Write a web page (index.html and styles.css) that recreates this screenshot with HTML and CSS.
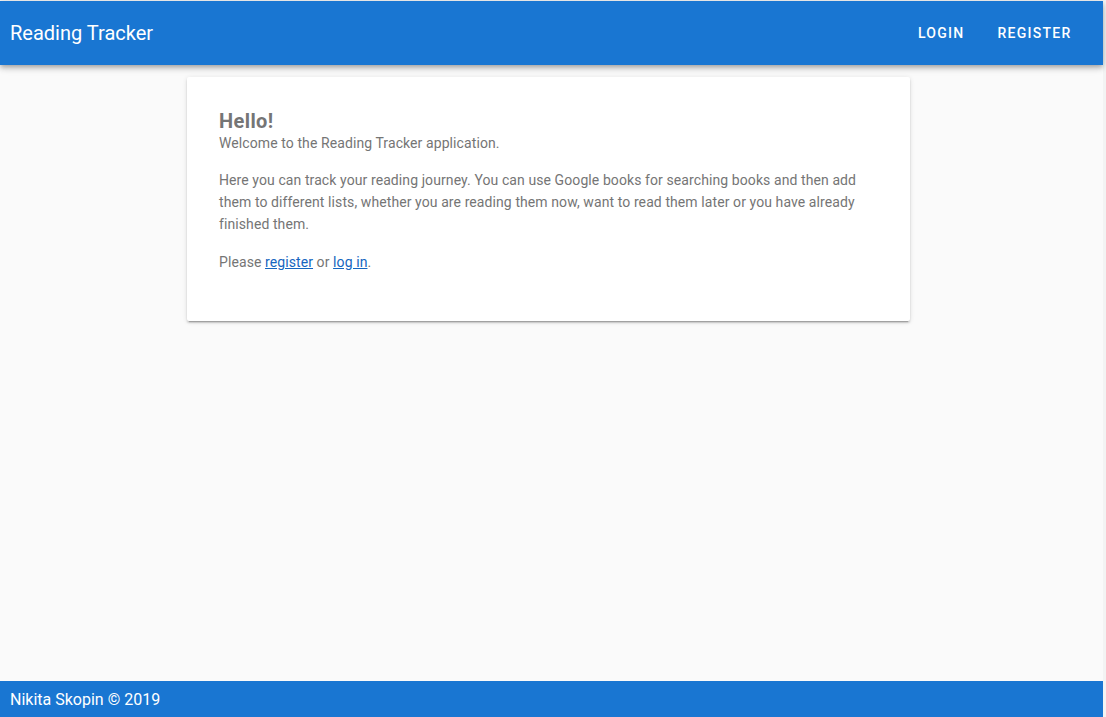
FILE: index.html
```html
<!DOCTYPE html>
<html>
<head>
<meta charset="utf-8">
<link rel="stylesheet" href="styles.css">
</head>
<body>
<div class="app">
  <header class="toolbar">
    <div class="title">Reading Tracker</div>
    <nav class="actions">
      <a class="btn">Login</a>
      <a class="btn">Register</a>
    </nav>
  </header>
  <main class="content">
    <section class="card">
      <h1 class="hello">Hello!</h1>
      <p class="welcome">Welcome to the Reading Tracker application.</p>
      <p class="text">Here you can track your reading journey. You can use Google books for searching books and then add them to different lists, whether you are reading them now, want to read them later or you have already finished them.</p>
      <p class="text">Please <a href="#" class="link">register</a> or <a href="#" class="link">log in</a>.</p>
    </section>
  </main>
  <footer class="footer">Nikita Skopin © 2019</footer>
</div>
</body>
</html>
```
FILE: styles.css
```css
html, body {
  margin: 0;
  padding: 0;
  height: 100%;
}
body {
  background: #f3f3f3;
  font-family: Roboto, "Liberation Sans", sans-serif;
  padding-top: 1px;
  box-sizing: border-box;
}
.app {
  width: 1103px;
  height: 716px;
  background: #fafafa;
  display: flex;
  flex-direction: column;
}
.toolbar {
  height: 64px;
  flex: none;
  background: #1976d2;
  color: #fff;
  display: flex;
  align-items: center;
  justify-content: space-between;
  padding: 0 15px 0 10px;
  box-shadow: 0 2px 4px -1px rgba(0,0,0,.2), 0 4px 5px 0 rgba(0,0,0,.14), 0 1px 10px 0 rgba(0,0,0,.12);
  position: relative;
  z-index: 2;
}
.title {
  font-size: 20px;
  font-weight: 400;
  letter-spacing: 0;
}
.actions {
  display: flex;
  height: 100%;
}
.btn {
  display: flex;
  align-items: center;
  padding: 0 16.5px;
  font-size: 14px;
  font-weight: 500;
  text-transform: uppercase;
  letter-spacing: 0.09em;
  cursor: pointer;
}
.content {
  flex: 1;
  padding-top: 12px;
}
.card {
  width: 723px;
  margin-left: 187px;
  box-sizing: border-box;
  background: #fff;
  border-radius: 2px;
  padding: 31px 32px 40px;
  height: 244px;
  box-shadow: 0 3px 1px -2px rgba(0,0,0,.2), 0 2px 2px 0 rgba(0,0,0,.14), 0 1px 5px 0 rgba(0,0,0,.12);
  color: #757575;
}
.hello {
  font-size: 20px;
  font-weight: 700;
  letter-spacing: 0.4px;
  margin: 0;
  line-height: 26px;
}
.welcome {
  font-size: 14px;
  letter-spacing: 0.09px;
  margin: 0 0 17px;
  line-height: 18px;
}
.text {
  font-size: 14px;
  letter-spacing: 0.09px;
  line-height: 22px;
  margin: 0 0 16px;
}
.link {
  color: #1565c0;
  text-decoration: underline;
}
.footer {
  height: 36px;
  flex: none;
  background: #1976d2;
  color: #fff;
  font-size: 16px;
  display: flex;
  align-items: center;
  padding-left: 10px;
}
```
